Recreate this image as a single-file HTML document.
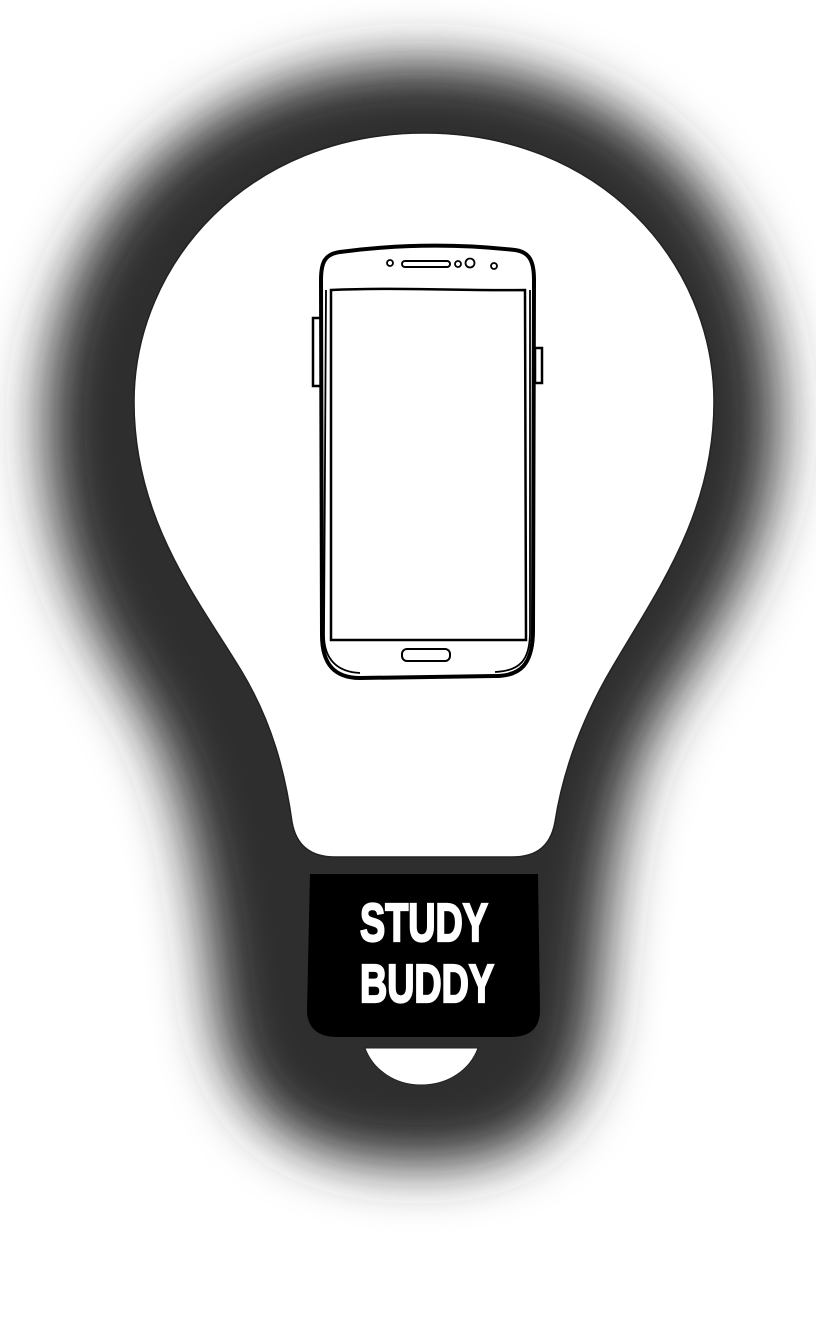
<!DOCTYPE html>
<html><head><meta charset="utf-8"><style>html,body{margin:0;padding:0;background:#fff}svg{display:block}</style></head>
<body>
<svg width="816" height="1337" viewBox="0 0 816 1337" xmlns="http://www.w3.org/2000/svg">
<defs><filter id="b" filterUnits="userSpaceOnUse" x="-200" y="-200" width="1216" height="1737"><feGaussianBlur stdDeviation="28"/></filter></defs>
<rect width="816" height="1337" fill="#fff"/>
<path filter="url(#b)" fill="#2e2e2e" d="M420,62 C650,62 778,230 778,420 C778,545 715,630 665,710 C620,785 610,880 600,990 C590,1120 530,1165 420,1165 C300,1165 228,1120 215,1000 C202,880 185,780 135,700 C85,620 45,540 45,420 C45,230 190,62 420,62 Z"/>
<path fill="#fff" stroke="#222" stroke-width="1.5" d="M424,133 C600,133 714,262 714,402 C714,520 650,600 605,680 C572,740 560,790 555,822 C550,850 532,857 512,857 L335,857 C310,857 296,845 292,822 C285,772 272,722 242,672 C200,602 134,522 134,402 C134,262 250,133 424,133 Z"/>
<path fill="#000" d="M310,874 L538,874 L540,1010 C540,1030 528,1037 510,1037 L337,1037 C318,1037 307,1028 307,1010 Z"/>
<g fill="#fff" stroke="#fff" stroke-width="2.2" font-family="Liberation Sans Narrow, Liberation Sans, sans-serif" font-weight="bold" font-size="54">
<text x="424" y="941" text-anchor="middle" textLength="128" lengthAdjust="spacingAndGlyphs">STUDY</text>
<text x="427" y="1002" text-anchor="middle" textLength="134" lengthAdjust="spacingAndGlyphs">BUDDY</text>
</g>
<path fill="#fff" stroke="#222" stroke-width="1" d="M365,1048 L478,1048 C470,1070 448,1085 421,1085 C395,1085 373,1070 365,1048 Z"/>
<g fill="none" stroke="#000">
<rect x="313" y="318" width="8" height="68" stroke-width="2.5" fill="#fff"/>
<rect x="535" y="348" width="7" height="35" stroke-width="2.5" fill="#fff"/>
<path stroke-width="4" fill="#fff" d="M340,252 C400,244 460,244 515,250 C530,252 534,262 534,280 L533,630 C533,665 520,676 495,676 L360,678 C335,678 322,665 322,635 L321,280 C321,262 325,254 340,252 Z"/>
<path stroke-width="1.8" d="M326,290 L324,635 C324,660 338,672 360,673 M530,290 L530,632 C530,660 520,671 495,672"/>
<path stroke-width="2.5" d="M331,290 C400,287 460,291 525,290 L526,640 L331,640 Z"/>
<rect x="402" y="649" width="48" height="12" rx="5" stroke-width="2"/>
<rect x="402" y="261" width="48" height="6" rx="3" stroke-width="2"/>
<circle cx="390" cy="263" r="3" stroke-width="1.8"/>
<circle cx="458" cy="264" r="3" stroke-width="1.8"/>
<circle cx="470" cy="263" r="4.5" stroke-width="1.8"/>
<circle cx="494" cy="266" r="3" stroke-width="1.8"/>
</g>
</svg>
</body></html>
